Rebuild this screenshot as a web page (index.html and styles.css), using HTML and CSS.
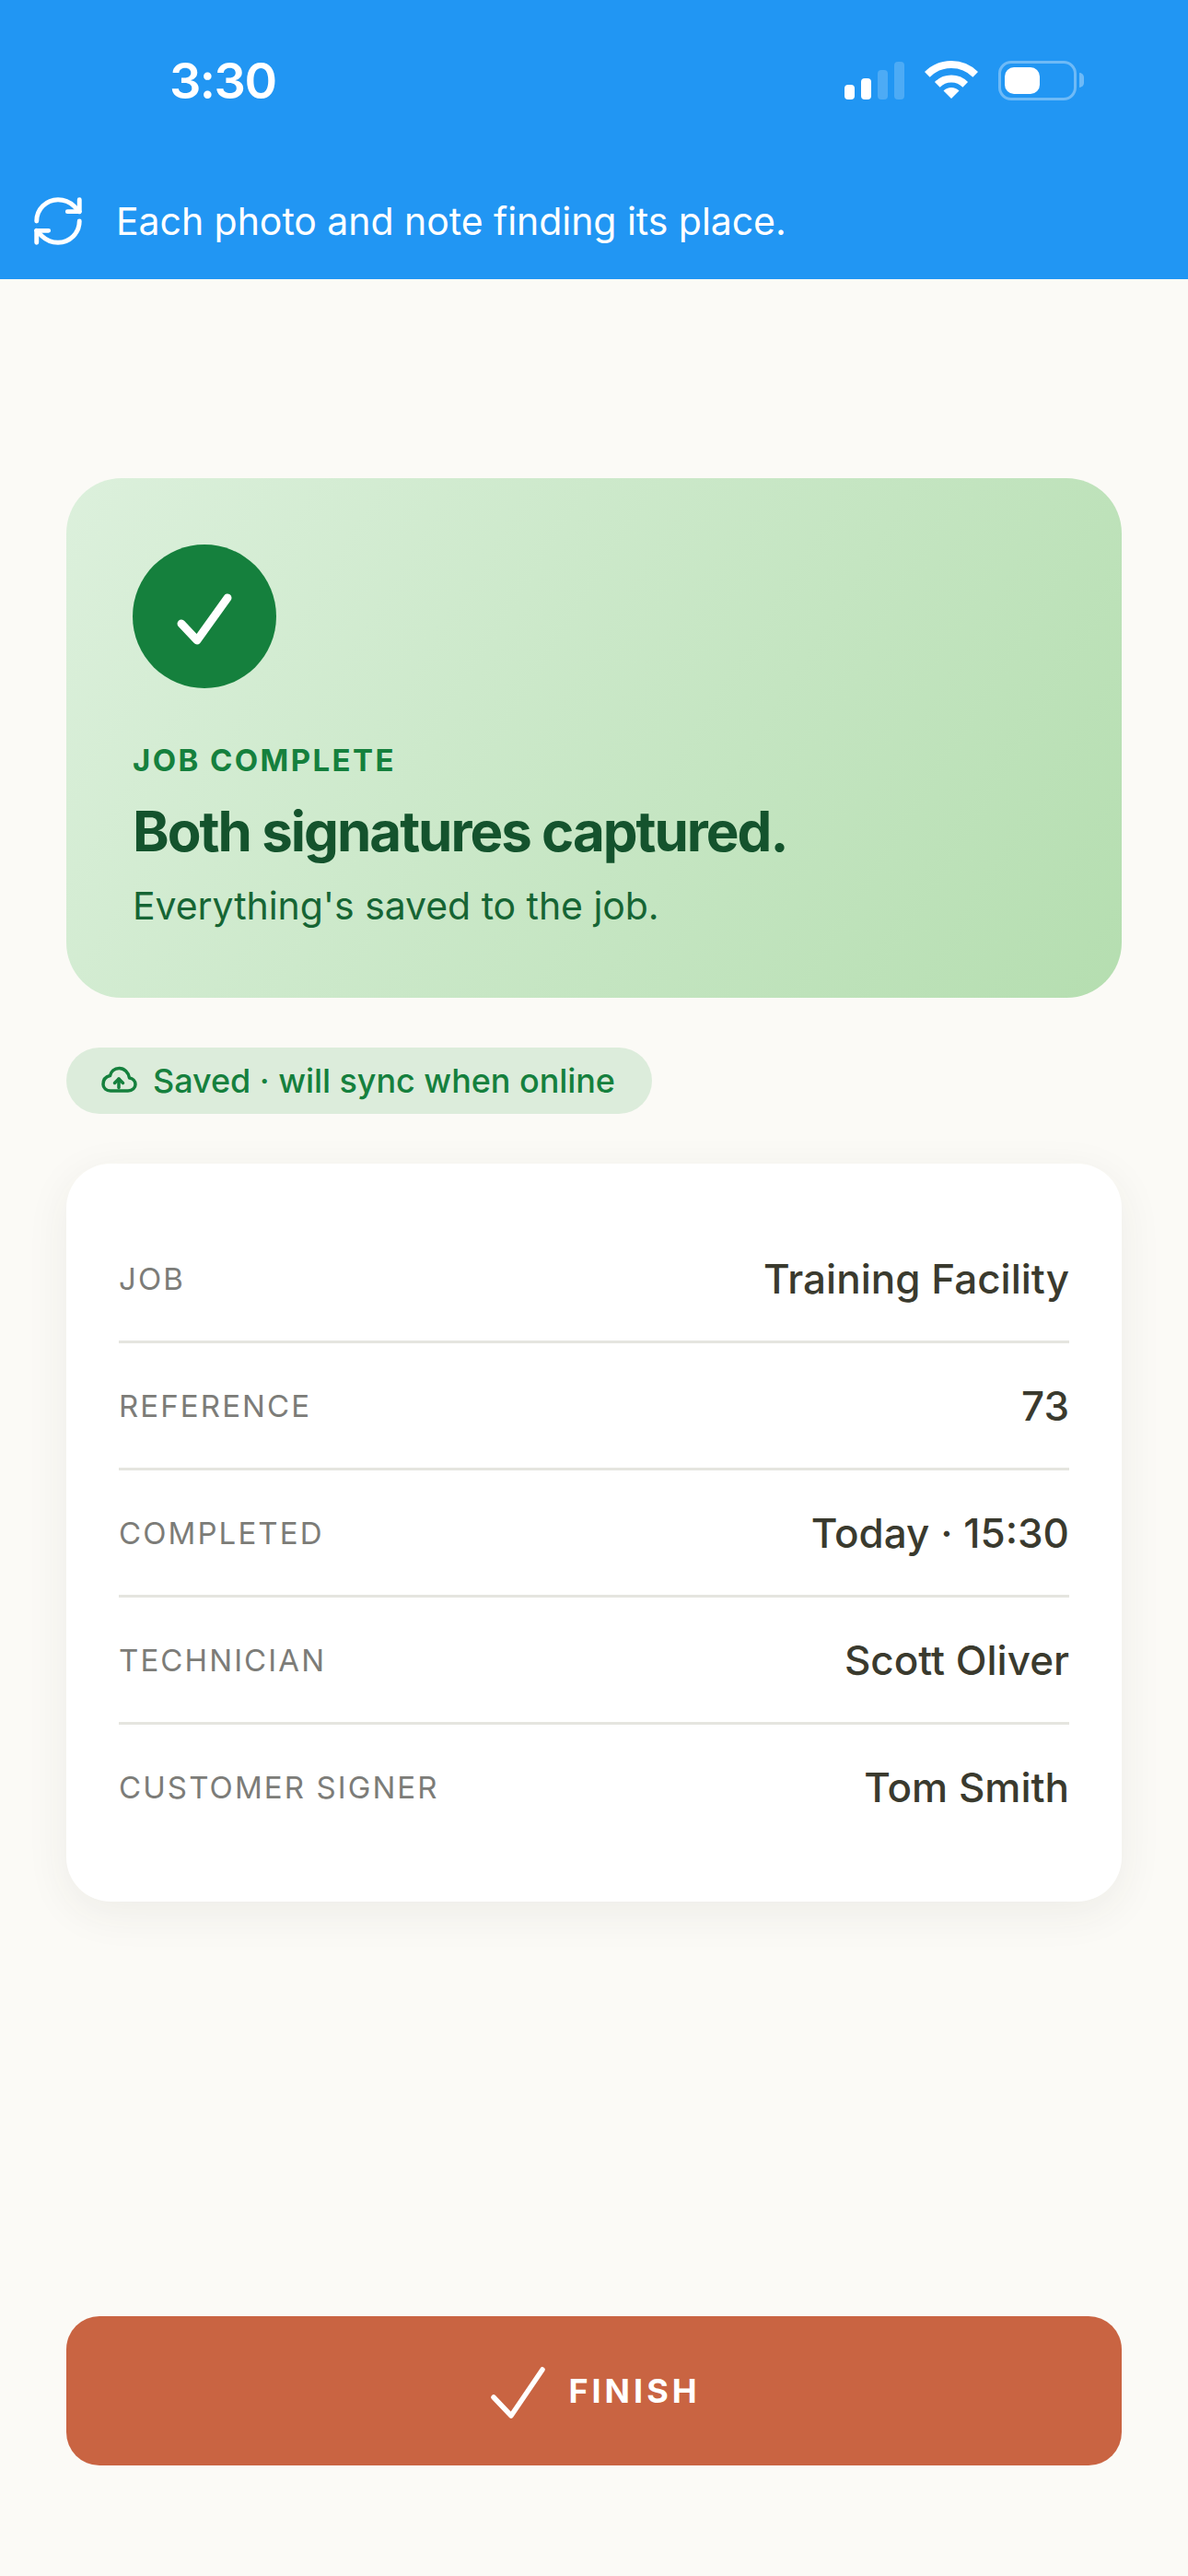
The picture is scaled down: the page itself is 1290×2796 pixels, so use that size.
FILE: index.html
```html
<!DOCTYPE html>
<html lang="en">
<head>
    <meta charset="UTF-8">
    <meta name="viewport" content="width=device-width, initial-scale=1.0">
    <title>Job complete</title>
    <link rel="stylesheet" href="styles.css">
</head>
<body>
    <div class="app">
        <header class="topbar">
            <div class="status-bar">
                <span class="time">3:30</span>
                <div class="status-icons">
                    <div class="signal">
                        <span class="bar bar-1"></span>
                        <span class="bar bar-2"></span>
                        <span class="bar bar-3"></span>
                        <span class="bar bar-4"></span>
                    </div>
                    <svg class="wifi" width="58" height="42" viewBox="0 0 58 42" fill="none" stroke="#fff">
                        <path d="M2.84 14.84A37 37 0 0 1 55.16 14.84" stroke-width="8"/>
                        <path d="M13.8 25.8A21.5 21.5 0 0 1 44.2 25.8" stroke-width="8"/>
                        <path d="M29 41L20.5 32.5A12 12 0 0 1 37.5 32.5Z" fill="#fff" stroke="none"/>
                    </svg>
                    <div class="battery">
                        <div class="battery-body"><span class="battery-fill"></span></div>
                        <span class="battery-nub"></span>
                    </div>
                </div>
            </div>
            <div class="banner">
                <svg width="62" height="62" viewBox="0 0 24 24" fill="none" stroke="#fff" stroke-width="1.9" stroke-linecap="round" stroke-linejoin="round">
                    <path d="M3 12a9 9 0 0 1 9-9 9.75 9.75 0 0 1 6.74 2.74L21 8"/>
                    <path d="M21 3v5h-5"/>
                    <path d="M21 12a9 9 0 0 1-9 9 9.75 9.75 0 0 1-6.74-2.74L3 16"/>
                    <path d="M8 16H3v5"/>
                </svg>
                <span>Each photo and note finding its place.</span>
            </div>
        </header>

        <main class="content">
            <section class="hero">
                <div class="hero-check">
                    <svg width="156" height="156" viewBox="0 0 156 156" fill="none" stroke="#fff" stroke-width="9" stroke-linecap="round" stroke-linejoin="round">
                        <path d="M53 86L70 104L103 58"/>
                    </svg>
                </div>
                <p class="hero-eyebrow">JOB COMPLETE</p>
                <h1 class="hero-title">Both signatures captured.</h1>
                <p class="hero-sub">Everything's saved to the job.</p>
            </section>

            <div class="saved-pill">
                <svg width="42" height="42" viewBox="0 0 42 42" fill="none" stroke="#15803d" stroke-width="3.5" stroke-linecap="round" stroke-linejoin="round">
                    <path d="M11 32H30C35 32 38 28.5 38 25C38 21 35 18.5 31.5 18C30.5 12 26 7.5 20.5 7.5C15 7.5 11.5 11 10.5 15.5C6 16.5 3 20 3 25C3 29 6.5 32 11 32Z"/>
                    <path d="M20 28.5V19"/>
                    <path d="M15.5 23.5L20 19L24.5 23.5"/>
                </svg>
                <span>Saved · will sync when online</span>
            </div>

            <section class="details">
                <div class="row">
                    <span class="row-label">JOB</span>
                    <span class="row-value">Training Facility</span>
                </div>
                <div class="row">
                    <span class="row-label">REFERENCE</span>
                    <span class="row-value">73</span>
                </div>
                <div class="row">
                    <span class="row-label">COMPLETED</span>
                    <span class="row-value">Today · 15:30</span>
                </div>
                <div class="row">
                    <span class="row-label">TECHNICIAN</span>
                    <span class="row-value">Scott Oliver</span>
                </div>
                <div class="row">
                    <span class="row-label">CUSTOMER SIGNER</span>
                    <span class="row-value">Tom Smith</span>
                </div>
            </section>

            <button class="finish">
                <svg width="68" height="60" viewBox="0 0 68 60" fill="none" stroke="#fff" stroke-width="5.5" stroke-linecap="round" stroke-linejoin="round">
                    <path d="M7 37L26 57L60 7"/>
                </svg>
                <span>FINISH</span>
            </button>
        </main>
    </div>
</body>
</html>
```

FILE: styles.css
```css
:root {
    --blue: #2196f3;
    --page: #fbfaf6;
    --green: #15803d;
    --green-dark: #14532d;
    --green-mid: #166534;
    --ink: #3a3a2e;
    --muted: #7c7c78;
    --line: #e5e5df;
    --orange: #c96442;
}

* {
    box-sizing: border-box;
}

body {
    margin: 0;
    background-color: var(--page);
    font-family: 'Inter', 'Liberation Sans', sans-serif;
}

.app {
    display: flex;
    flex-direction: column;
    min-height: 2796px;
}

.topbar {
    background-color: var(--blue);
    color: white;
    height: 303px;
}

.status-bar {
    display: flex;
    justify-content: space-between;
    align-items: center;
    height: 174px;
    padding: 0 113px 0 184px;
}

.time {
    font-size: 54px;
    font-weight: 600;
    letter-spacing: -1.5px;
}

.status-icons {
    display: flex;
    align-items: center;
    gap: 22px;
}

.signal {
    display: flex;
    align-items: flex-end;
    gap: 7px;
    height: 41px;
}

.bar {
    width: 11px;
    border-radius: 4px;
    background-color: white;
}

.bar-1 {
    height: 16px;
}

.bar-2 {
    height: 23px;
}

.bar-3 {
    height: 32px;
    opacity: 0.2;
}

.bar-4 {
    height: 41px;
    opacity: 0.2;
}

.battery {
    display: flex;
    align-items: center;
    gap: 3px;
}

.battery-body {
    width: 85px;
    height: 43px;
    padding: 4px;
    border: 3px solid rgba(255, 255, 255, 0.35);
    border-radius: 14px;
}

.battery-fill {
    display: block;
    width: 38px;
    height: 100%;
    border-radius: 10px;
    background-color: white;
}

.battery-nub {
    width: 5px;
    height: 16px;
    border-radius: 0 6px 6px 0;
    background-color: rgba(255, 255, 255, 0.35);
}

.banner {
    display: flex;
    align-items: center;
    gap: 32px;
    height: 129px;
    padding: 3px 0 0 32px;
    font-size: 41px;
    letter-spacing: -0.05px;
}

.content {
    flex: 1;
    display: flex;
    flex-direction: column;
    padding: 216px 72px 120px;
}

.hero {
    height: 564px;
    padding: 72px 72px 0;
    border-radius: 60px;
    background: linear-gradient(122deg, #dcf0dc 0%, #b5deb0 100%);
}

.hero-check {
    width: 156px;
    height: 156px;
    border-radius: 50%;
    background-color: var(--green);
}

.hero-check svg {
    display: block;
}

.hero-eyebrow {
    margin: 58px 0 0;
    color: var(--green);
    font-size: 33px;
    font-weight: 700;
    line-height: 40px;
    letter-spacing: 2.4px;
}

.hero-title {
    margin: 21px 0 0;
    color: var(--green-dark);
    font-size: 60px;
    font-weight: 700;
    line-height: 72px;
    letter-spacing: -2px;
}

.hero-sub {
    margin: 17px 0 0;
    color: var(--green-mid);
    font-size: 41px;
    line-height: 56px;
    letter-spacing: -0.06px;
}

.saved-pill {
    align-self: flex-start;
    display: flex;
    align-items: center;
    gap: 15px;
    height: 72px;
    margin-top: 54px;
    padding: 0 40px 0 37px;
    border-radius: 36px;
    background-color: #dcecdb;
    color: var(--green);
    font-size: 36px;
    font-weight: 500;
    letter-spacing: -0.06px;
}

.details {
    height: 801px;
    margin-top: 54px;
    padding: 57px;
    border-radius: 48px;
    background-color: white;
    box-shadow: 0 12px 48px rgba(60, 60, 40, 0.07);
}

.row {
    display: flex;
    justify-content: space-between;
    align-items: center;
    height: 138px;
    border-bottom: 3px solid var(--line);
}

.row:last-child {
    height: 135px;
    border-bottom: none;
}

.row-label {
    color: var(--muted);
    font-size: 33px;
    letter-spacing: 2.1px;
}

.row-value {
    color: var(--ink);
    font-size: 44px;
    font-weight: 500;
}

.finish {
    display: flex;
    justify-content: center;
    align-items: center;
    gap: 20px;
    height: 162px;
    margin-top: auto;
    border: none;
    border-radius: 36px;
    background-color: var(--orange);
    color: white;
    font-family: inherit;
    font-size: 36px;
    font-weight: 700;
    letter-spacing: 4px;
}
```
